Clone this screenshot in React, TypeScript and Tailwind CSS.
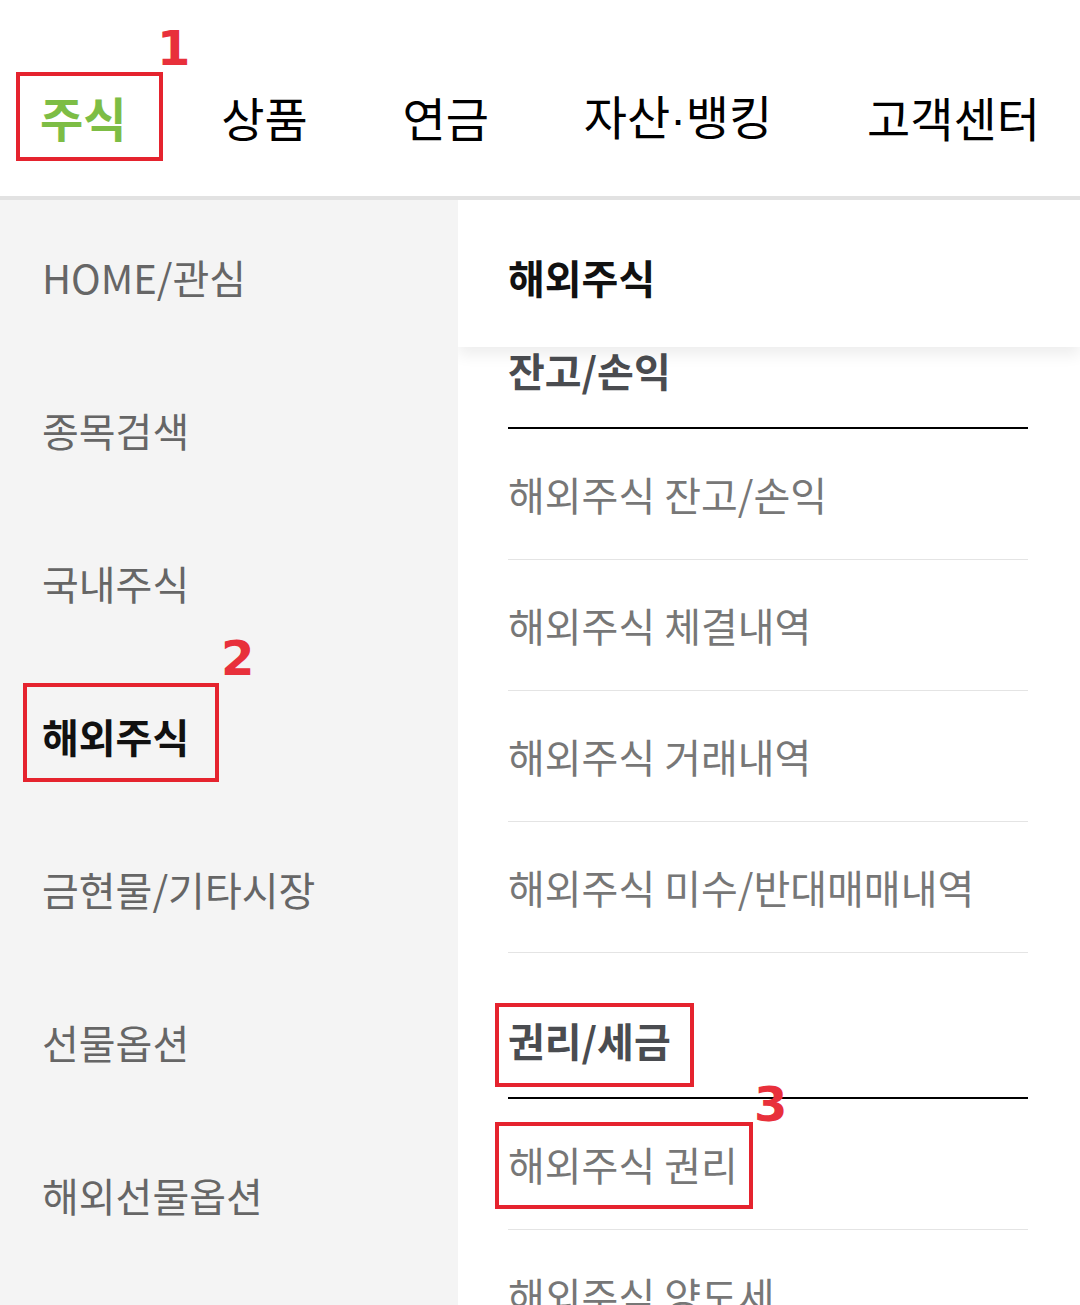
import React from "react";

const navItems = ["주식", "상품", "연금", "자산·뱅킹", "고객센터"];

const leftMenu = [
	"HOME/관심",
	"종목검색",
	"국내주식",
	"해외주식",
	"금현물/기타시장",
	"선물옵션",
	"해외선물옵션",
];

const sections = [
	{
		title: "잔고/손익",
		items: [
			"해외주식 잔고/손익",
			"해외주식 체결내역",
			"해외주식 거래내역",
			"해외주식 미수/반대매매내역",
		],
	},
	{
		title: "권리/세금",
		items: ["해외주식 권리", "해외주식 양도세"],
	},
];

const numStyle = { fontFamily: '"DejaVu Sans", sans-serif' };

const App = () => {
	return (
		<div
			className="relative w-[1080px] h-[1305px] overflow-hidden bg-white"
			style={{ fontFamily: '"Noto Sans CJK KR", "Noto Sans", sans-serif' }}>
			{/* 상단 메뉴 */}
			<nav className="flex items-center justify-between h-[200px] pt-[36px] px-[40px] border-b-4 border-[#e2e2e2]">
				{navItems.map((item, i) => (
					<span
						key={item}
						className={`text-[47px] leading-none ${
							i === 0 ? "text-[#7dbd45] font-bold" : "text-black"
						}`}>
						{item.includes("·") ? (
							<>
								{item.split("·")[0]}
								<span style={{ fontFamily: '"Liberation Sans", sans-serif' }}>·</span>
								{item.split("·")[1]}
							</>
						) : (
							item
						)}
					</span>
				))}
			</nav>

			<div className="flex">
				{/* 좌측 카테고리 */}
				<div className="w-[458px] bg-[#f4f4f4] h-[1105px]">
					{leftMenu.map((item) => (
						<div
							key={item}
							className={`h-[153px] flex items-center pl-[42px] text-[40px] leading-none ${
								item === "해외주식" ? "text-[#111] font-bold" : "text-[#666]"
							}`}>
							{item}
						</div>
					))}
				</div>

				{/* 우측 하위메뉴 */}
				<div className="relative flex-1 h-[1105px] overflow-hidden">
					<div className="absolute top-0 left-0 right-0 z-10 h-[147px] bg-white flex items-center pt-[6px] pl-[50px] shadow-[0_8px_14px_rgba(0,0,0,0.07)]">
						<span className="text-[40px] leading-none font-bold text-[#111]">
							해외주식
						</span>
					</div>

					<div className="pt-[83px] pl-[50px] pr-[52px]">
						{sections.map((section) => (
							<div key={section.title}>
								<div className="h-[146px] flex items-end pb-[37px] border-b-2 border-black">
									<span className="text-[40px] leading-none font-bold text-[#4a4c50]">
										{section.title}
									</span>
								</div>
								{section.items.map((item) => (
									<div
										key={item}
										className="h-[131px] flex items-center border-b border-[#e4e4e4] text-[40px] leading-none text-[#777]">
										{item}
									</div>
								))}
							</div>
						))}
					</div>
				</div>
			</div>

			{/* 주석 표시 */}
			<div className="absolute left-[16px] top-[72px] w-[147px] h-[89px] border-4 border-[#e5232e]" />
			<span
				className="absolute left-[157px] top-[24px] text-[48px] font-bold text-[#e8303b] leading-none"
				style={numStyle}>
				1
			</span>

			<div className="absolute left-[23px] top-[683px] w-[196px] h-[99px] border-4 border-[#e5232e]" />
			<span
				className="absolute left-[221px] top-[634px] text-[48px] font-bold text-[#e8303b] leading-none"
				style={numStyle}>
				2
			</span>

			<div className="absolute left-[495px] top-[1003px] w-[199px] h-[84px] border-4 border-[#e5232e]" />
			<div className="absolute left-[495px] top-[1122px] w-[258px] h-[87px] border-4 border-[#e5232e]" />
			<span
				className="absolute left-[754px] top-[1080px] text-[48px] font-bold text-[#e8303b] leading-none"
				style={numStyle}>
				3
			</span>
		</div>
	);
};

export default App;
